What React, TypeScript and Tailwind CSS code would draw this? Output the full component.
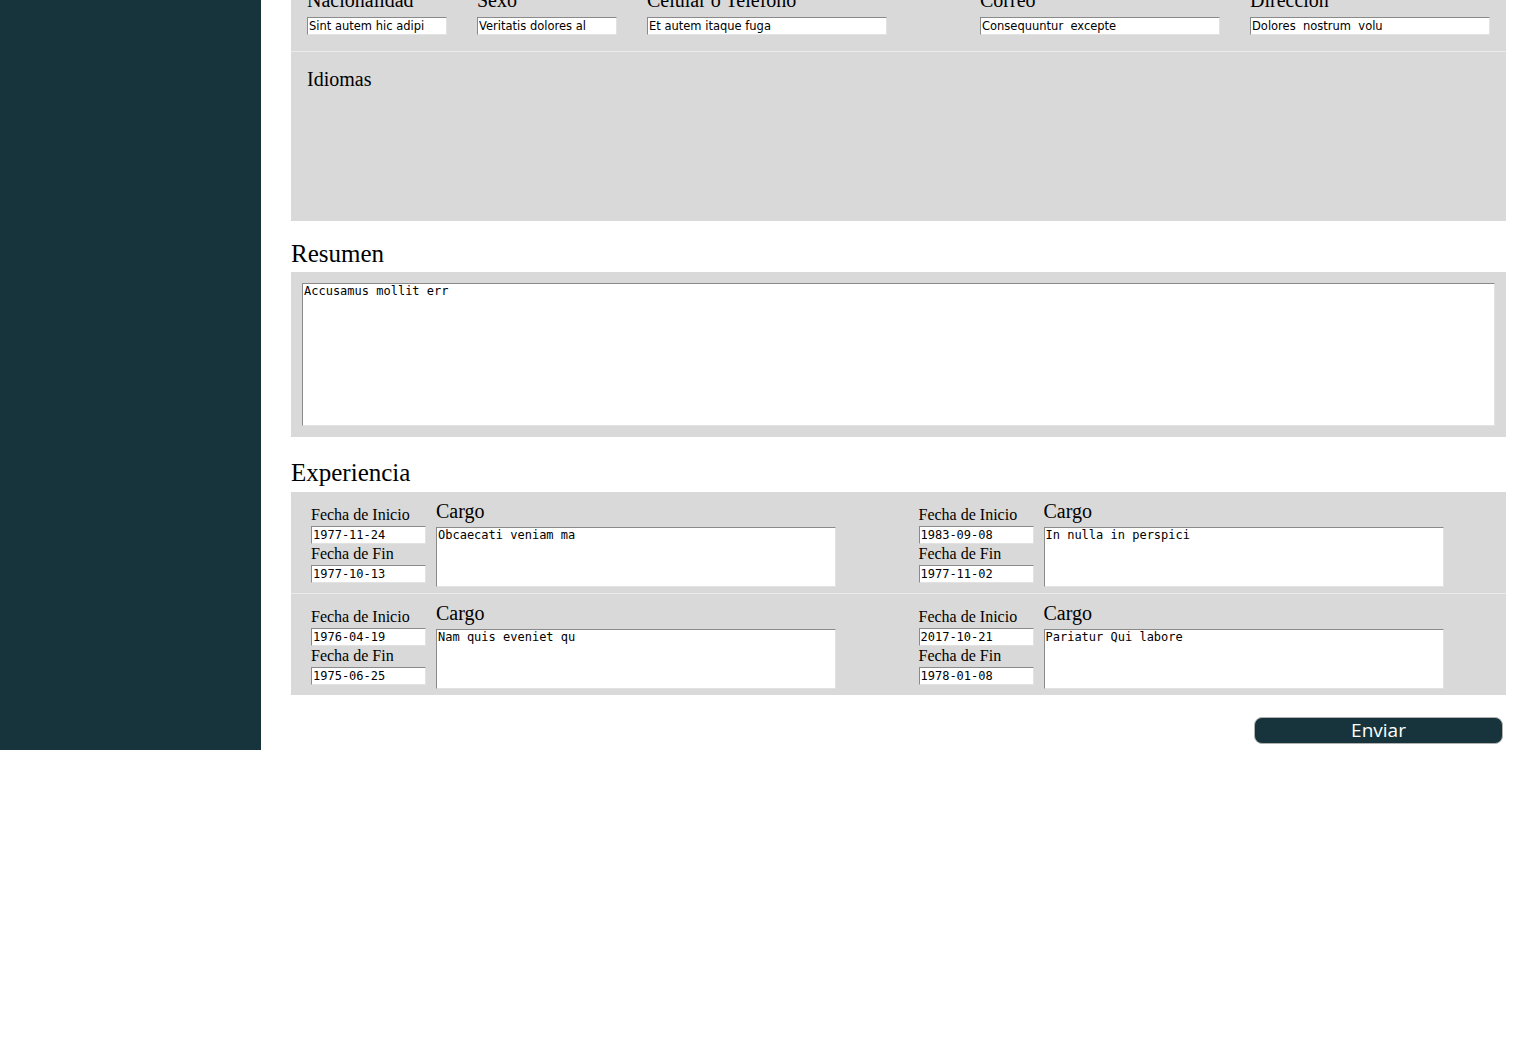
import React from "react";

const serif = { fontFamily: '"Liberation Serif", "Times New Roman", serif' };
const sans = { fontFamily: '"DejaVu Sans", "Liberation Sans", sans-serif' };
const mono = { fontFamily: '"DejaVu Sans Mono", "Liberation Mono", monospace' };

const inset =
  "border border-t-[#8a8a8a] border-l-[#8a8a8a] border-r-[#e2e2e2] border-b-[#e2e2e2] bg-white text-black outline-none";

function TopField({ label, value, width, extra = "" }: { label: string; value: string; width: string; extra?: string }) {
  return (
    <div className={`flex flex-col ${extra}`}>
      <label className="text-[20px] leading-[22px] text-black mb-[6px]" style={serif}>
        {label}
      </label>
      <input
        readOnly
        value={value}
        className={`${inset} ${width} h-[18px] px-[1px] text-[11.5px] leading-[14px]`}
        style={sans}
      />
    </div>
  );
}

function Job({ start, end, cargo }: { start: string; end: string; cargo: string }) {
  return (
    <div className="flex items-center gap-[10px] pl-5 h-full">
      <div className="flex flex-col w-[115px] pt-[3px]">
        <span className="text-[16px] leading-[18px] mb-[2px]" style={serif}>Fecha de Inicio</span>
        <input readOnly value={start} className={`${inset} w-[115px] h-[18px] px-[1px] text-[12px]`} style={mono} />
        <span className="text-[16px] leading-[18px] mt-[1px] mb-[2px]" style={serif}>Fecha de Fin</span>
        <input readOnly value={end} className={`${inset} w-[115px] h-[18px] px-[1px] text-[12px]`} style={mono} />
      </div>
      <div className="flex flex-col pt-[1px]">
        <span className="text-[20px] leading-[23px] mb-[4px]" style={serif}>Cargo</span>
        <textarea
          readOnly
          value={cargo}
          className={`${inset} w-[400px] h-[60px] resize-none px-[1px] text-[12px] leading-[15px]`}
          style={mono}
        />
      </div>
    </div>
  );
}

export default function App() {
  const jobs = [
    [
      { start: "1977-11-24", end: "1977-10-13", cargo: "Obcaecati veniam ma" },
      { start: "1983-09-08", end: "1977-11-02", cargo: "In nulla in perspici" },
    ],
    [
      { start: "1976-04-19", end: "1975-06-25", cargo: "Nam quis eveniet qu" },
      { start: "2017-10-21", end: "1978-01-08", cargo: "Pariatur Qui labore" },
    ],
  ];

  return (
    <div className="flex w-full bg-white text-black overflow-hidden">
      <aside className="w-[261px] shrink-0 self-stretch bg-[#17343c]" />

      <main className="flex-1 px-[30px] pb-[6px]">
        <div className="-mt-[11px]">
          <div className="bg-[#d9d9d9]">
            <div className="flex px-4 pb-4 gap-[30px] border-b border-[#ebebeb]">
              <TopField label="Nacionalidad" value="Sint autem hic adipi" width="w-[140px]" />
              <TopField label="Sexo" value="Veritatis dolores al" width="w-[140px]" />
              <TopField label="Celular o Teléfono" value="Et autem itaque fuga" width="w-[240px]" />
              <TopField label="Correo" value="Consequuntur  excepte" width="w-[240px]" extra="ml-[63px]" />
              <TopField label="Dirección" value="Dolores  nostrum  volu" width="w-[240px]" />
            </div>
            <div className="h-[169px] px-4 pt-4">
              <span className="text-[20px] leading-[22px]" style={serif}>Idiomas</span>
            </div>
          </div>

          <h2 className="text-[25px] leading-[27px] mt-[19px] mb-[5px]" style={serif}>Resumen</h2>
          <div className="bg-[#d9d9d9] p-[11px]">
            <textarea
              readOnly
              value="Accusamus mollit err"
              className={`${inset} block w-full h-[143px] resize-none px-[1px] text-[12px] leading-[15px]`}
              style={mono}
            />
          </div>

          <h2 className="text-[25px] leading-[27px] mt-[22px] mb-[6px]" style={serif}>Experiencia</h2>
          <div className="bg-[#d9d9d9]">
            {jobs.map((row, i) => (
              <div
                key={i}
                className={`grid grid-cols-2 ${i === 0 ? "border-b border-[#ebebeb] h-[102px]" : "h-[101px]"}`}
              >
                {row.map((j) => (
                  <Job key={j.start} start={j.start} end={j.end} cargo={j.cargo} />
                ))}
              </div>
            ))}
          </div>

          <div className="flex justify-end mt-[22px] pr-[3px]">
            <button
              className="w-[249px] h-[27px] rounded-[8px] bg-[#17343c] border border-[#b0b0b0] text-white text-[19px] leading-[25px]"
              style={{ fontFamily: '"Open Sans", "Noto Sans", sans-serif' }}
            >
              Enviar
            </button>
          </div>
        </div>
      </main>
    </div>
  );
}
